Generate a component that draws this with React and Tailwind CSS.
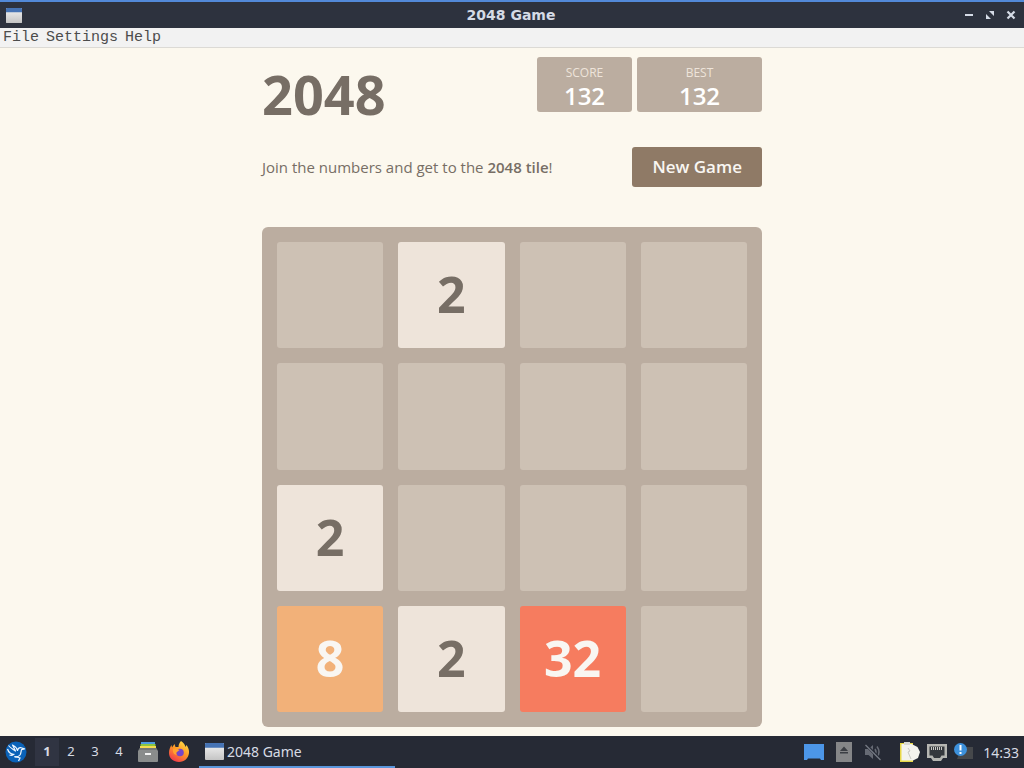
import React from "react";

const TILE_STYLES = {
  0: "bg-[#cdc1b4]",
  2: "bg-[#eee4da] text-[#776e65]",
  8: "bg-[#f2b179] text-[#f9f6f2]",
  32: "bg-[#f67c5f] text-[#f9f6f2]",
};

const BOARD = [
  [0, 2, 0, 0],
  [0, 0, 0, 0],
  [2, 0, 0, 0],
  [8, 2, 32, 0],
];

function WindowIcon({ className }) {
  return (
    <svg viewBox="0 0 20 18" className={className} preserveAspectRatio="none" aria-hidden="true">
      <defs>
        <linearGradient id="pane" x1="0" y1="0" x2="0" y2="1">
          <stop offset="0" stopColor="#f4f4f4" />
          <stop offset="1" stopColor="#c4c4c4" />
        </linearGradient>
      </defs>
      <rect width="20" height="18" rx="1" fill="url(#pane)" />
      <path d="M1 0h18a1 1 0 0 1 1 1v4H0V1a1 1 0 0 1 1-1z" fill="#4673b4" />
    </svg>
  );
}

function TitleBar() {
  return (
    <header className="grid h-7 shrink-0 grid-cols-[1fr_auto_1fr] items-center border-t-2 border-[#5289d8] bg-[#2d323e] pr-2 pl-1.5">
      <WindowIcon className="h-[15px] w-4" />
      <h1 className="font-['DejaVu_Sans',sans-serif] text-[14px] leading-5 font-bold text-[#d5dbe6]">2048 Game</h1>
      <div className="flex justify-end gap-[11px] text-[#d5dbe6]">
        <button type="button" aria-label="Minimize">
          <svg viewBox="0 0 10 10" className="size-2.5"><path d="M1 4h8v2H1z" fill="currentColor" /></svg>
        </button>
        <button type="button" aria-label="Restore">
          <svg viewBox="0 0 10 10" className="size-2.5">
            <path d="M4 1h5v5zM1 4l5 5H1z" fill="currentColor" />
          </svg>
        </button>
        <button type="button" aria-label="Close">
          <svg viewBox="0 0 10 10" className="size-2.5">
            <path d="M1.500 1.500l7 7M8.500 1.500l-7 7" stroke="currentColor" strokeWidth="2.200" />
          </svg>
        </button>
      </div>
    </header>
  );
}

function MenuBar() {
  return (
    <nav className="flex h-5 shrink-0 items-start gap-[7px] border-b border-[#dcdad5] bg-[#f2f2f2] px-[3px] font-['Liberation_Mono',monospace] text-[15px] leading-5 text-[#4c4c4c]">
      <button type="button">File</button>
      <button type="button">Settings</button>
      <button type="button">Help</button>
    </nav>
  );
}

function ScoreBox({ label, value, className }) {
  return (
    <div className={`flex h-[55px] flex-col items-center rounded-[3px] bg-[#bbada0] pt-2 ${className}`}>
      <span className="text-[12px] leading-4 text-[#eee4da]">{label}</span>
      <span className="text-[24px] leading-[30px] font-semibold text-white">{value}</span>
    </div>
  );
}

function Game() {
  return (
    <main className="flex-1 overflow-hidden bg-[#fcf8ee] font-['Open_Sans',sans-serif] text-[#776e65]">
      <div className="mx-auto max-w-[500px] pt-[9px]">
        <div className="flex items-start justify-between">
          <h2 className="pt-0.5 text-[54px] leading-[70px] font-bold">2048</h2>
          <div className="flex gap-[5px]">
            <ScoreBox label="SCORE" value="132" className="w-[95px]" />
            <ScoreBox label="BEST" value="132" className="w-[125px]" />
          </div>
        </div>
        <div className="mt-[18px] flex items-center justify-between">
          <p className="text-[15px] leading-6">
            Join the numbers and get to the <strong className="font-semibold">2048 tile</strong>!
          </p>
          <button type="button" className="h-10 rounded-[3px] bg-[#8f7a66] px-5 text-[17px] font-semibold text-[#f9f6f2]">
            New Game
          </button>
        </div>
        <div className="mt-10 grid grid-cols-4 gap-[15px] rounded-md bg-[#bbada0] p-[15px]">
          {BOARD.flat().map((value, i) => (
            <div
              key={i}
              className={`flex aspect-square items-center justify-center rounded-[3px] pb-0.5 text-[50px] leading-none font-bold ${TILE_STYLES[value]}`}
            >
              {value || ""}
            </div>
          ))}
        </div>
      </div>
    </main>
  );
}

function BirdIcon() {
  return (
    <svg viewBox="0 0 22 22" className="size-[22px]" aria-hidden="true">
      <circle cx="11" cy="11" r="10.500" fill="#0a62b8" />
      <path d="M3.500 4.500c2 2.500 4.500 3.500 7 5.500L7.500 4c3 1.500 4.500 3.500 5 5.500.5-2 1.800-3 3.500-2.800l3.500 1.100-3 .8c-.5 1.400-.3 3.400-1.500 5.400-1.500 2-3.500 2-5.500 1.700" fill="none" stroke="#eef6ff" strokeWidth="1.200" strokeLinejoin="round" />
      <path d="M2.500 8c1 3 3 5 6 5.500-1 .8-2.500 1-4 .5M9.500 15.700c2 .3 4 .8 5.500 1.300l-1.500 3" fill="none" stroke="#eef6ff" strokeWidth="1.300" />
    </svg>
  );
}

function CabinetIcon() {
  return (
    <svg viewBox="0 0 20 20" className="size-5" aria-hidden="true">
      <path d="M3 0h14v3H3z" fill="#4c9be0" />
      <path d="M2.500 2h15v3h-15z" fill="#8dc63f" />
      <path d="M2 4h16v3H2z" fill="#f4dc4e" />
      <path d="M2 6h16l2 3v10a1 1 0 0 1-1 1H1a1 1 0 0 1-1-1V9z" fill="#8a8c8c" />
      <path d="M2 6h16l1.500 2H.5z" fill="#747777" />
      <rect x="7" y="11" width="6" height="2" fill="#f3f3f3" />
    </svg>
  );
}

function FirefoxIcon() {
  return (
    <svg viewBox="0 0 22 22" className="size-[22px]" aria-hidden="true">
      <defs>
        <linearGradient id="fox" x1="0.800" y1="0" x2="0.200" y2="1">
          <stop offset="0" stopColor="#ffe14a" />
          <stop offset="0.450" stopColor="#ff9a26" />
          <stop offset="1" stopColor="#f0314f" />
        </linearGradient>
      </defs>
      <path d="M13 0c3 2 4 4 4.500 6l1-2c2 3 2.800 5 2.500 8-.5 5-4.500 9-10 9S1 17.500 1 12c0-3 1-6 2.500-8L4 6.500 6.500 3l1 3h3C10.500 3.500 11.500 1.500 13 0z" fill="url(#fox)" />
      <circle cx="12" cy="11.500" r="3.800" fill="#7546c9" />
      <path d="M5 8c3-1 4.500 0 6.500 1L9 11c-1 .5-1 2 0 3-3 0-4.500-3-4-6z" fill="#ffa22e" />
    </svg>
  );
}

function TrayIcons() {
  return (
    <div className="flex items-center">
      <svg viewBox="0 0 20 17" className="mr-3 h-[17px] w-5" role="img" aria-label="Show desktop">
        <path d="M0 0h20v16h-3l-1-1.500H4L3 16H0z" fill="#4c96e8" />
      </svg>
      <svg viewBox="0 0 16 20" className="mr-3 h-5 w-4" role="img" aria-label="Removable media">
        <rect width="16" height="20" fill="#858688" />
        <path d="M8 4.500l4 4.500H4zM4 10h8v1.500H4z" fill="#3b3e44" />
      </svg>
      <svg viewBox="0 0 18 18" className="mr-[18px] size-[18px]" role="img" aria-label="Muted">
        <path d="M1 6h3.500L9 2v14l-4.500-4H1z" fill="#666a74" />
        <path d="M11 6q2 3 0 6M13 3.500q4 5.500 0 11" fill="none" stroke="#666a74" strokeWidth="1.500" />
        <path d="M1 1l16 16" stroke="#262a35" strokeWidth="3" />
        <path d="M1.500 2l15 15" stroke="#777b85" strokeWidth="1.300" />
      </svg>
      <svg viewBox="0 0 20 20" className="mr-[7px] size-5" role="img" aria-label="Clipboard">
        <path d="M0 1h13v19H0z" fill="#e8d849" />
        <path d="M1.500 2h10l6 3 2.500 5-2 6-5 2.500H1.500z" fill="#f3f3ee" />
        <path d="M4 0h6v3H4z" fill="#d8d8d2" />
        <path d="M8 6l2 3-2 1 3 7" fill="none" stroke="#c8c8c2" />
      </svg>
      <svg viewBox="0 0 20 17" className="mr-[7px] h-[17px] w-5" role="img" aria-label="Network">
        <path d="M0 0h20v14h-4l-2 3H6l-2-3H0z" fill="#b5b5b1" />
        <path d="M2.500 2.500h15v9h-3L13 14H7l-1.500-2.500h-3z" fill="#35383d" />
        <path d="M4.500 3v3M6.500 3v3M8.500 3v3M10.500 3v3M12.500 3v3M14.500 3v3" stroke="#c9c9c5" />
      </svg>
      <svg viewBox="0 0 20 18" className="mr-[9px] h-[18px] w-5" role="img" aria-label="Updates available">
        <path d="M8 4h11v12H3z" fill="#46484b" />
        <circle cx="6.500" cy="6.500" r="6.500" fill="#3d91dc" />
        <path d="M5.500 2h2v5.500h-2zM5.500 9h2v2h-2z" fill="#fff" />
      </svg>
    </div>
  );
}

function Taskbar() {
  return (
    <footer className="flex h-8 shrink-0 items-center bg-[#262a35] font-['Noto_Sans',sans-serif] text-[#d7dbe4]">
      <button type="button" aria-label="Application menu" className="ml-[5px]"><BirdIcon /></button>
      <div className="ml-2 flex text-[13px]">
        <button type="button" className="h-7 w-6 bg-[#303442] font-bold">1</button>
        <button type="button" className="h-7 w-6">2</button>
        <button type="button" className="h-7 w-6">3</button>
        <button type="button" className="h-7 w-6">4</button>
      </div>
      <button type="button" aria-label="File manager" className="ml-[7px]"><CabinetIcon /></button>
      <button type="button" aria-label="Firefox" className="ml-2.5"><FirefoxIcon /></button>
      <button type="button" className="ml-[9px] flex h-8 w-[196px] items-center gap-[3px] border-b-2 border-[#5a96dc] pl-1.5 text-[14px]">
        <WindowIcon className="h-[17px] w-[19px]" />
        2048 Game
      </button>
      <div className="ml-auto flex items-center pr-[5px]">
        <TrayIcons />
        <time className="text-[14px]">14:33</time>
      </div>
    </footer>
  );
}

export default function App() {
  return (
    <div className="flex min-h-screen flex-col">
      <TitleBar />
      <MenuBar />
      <Game />
      <Taskbar />
    </div>
  );
}
